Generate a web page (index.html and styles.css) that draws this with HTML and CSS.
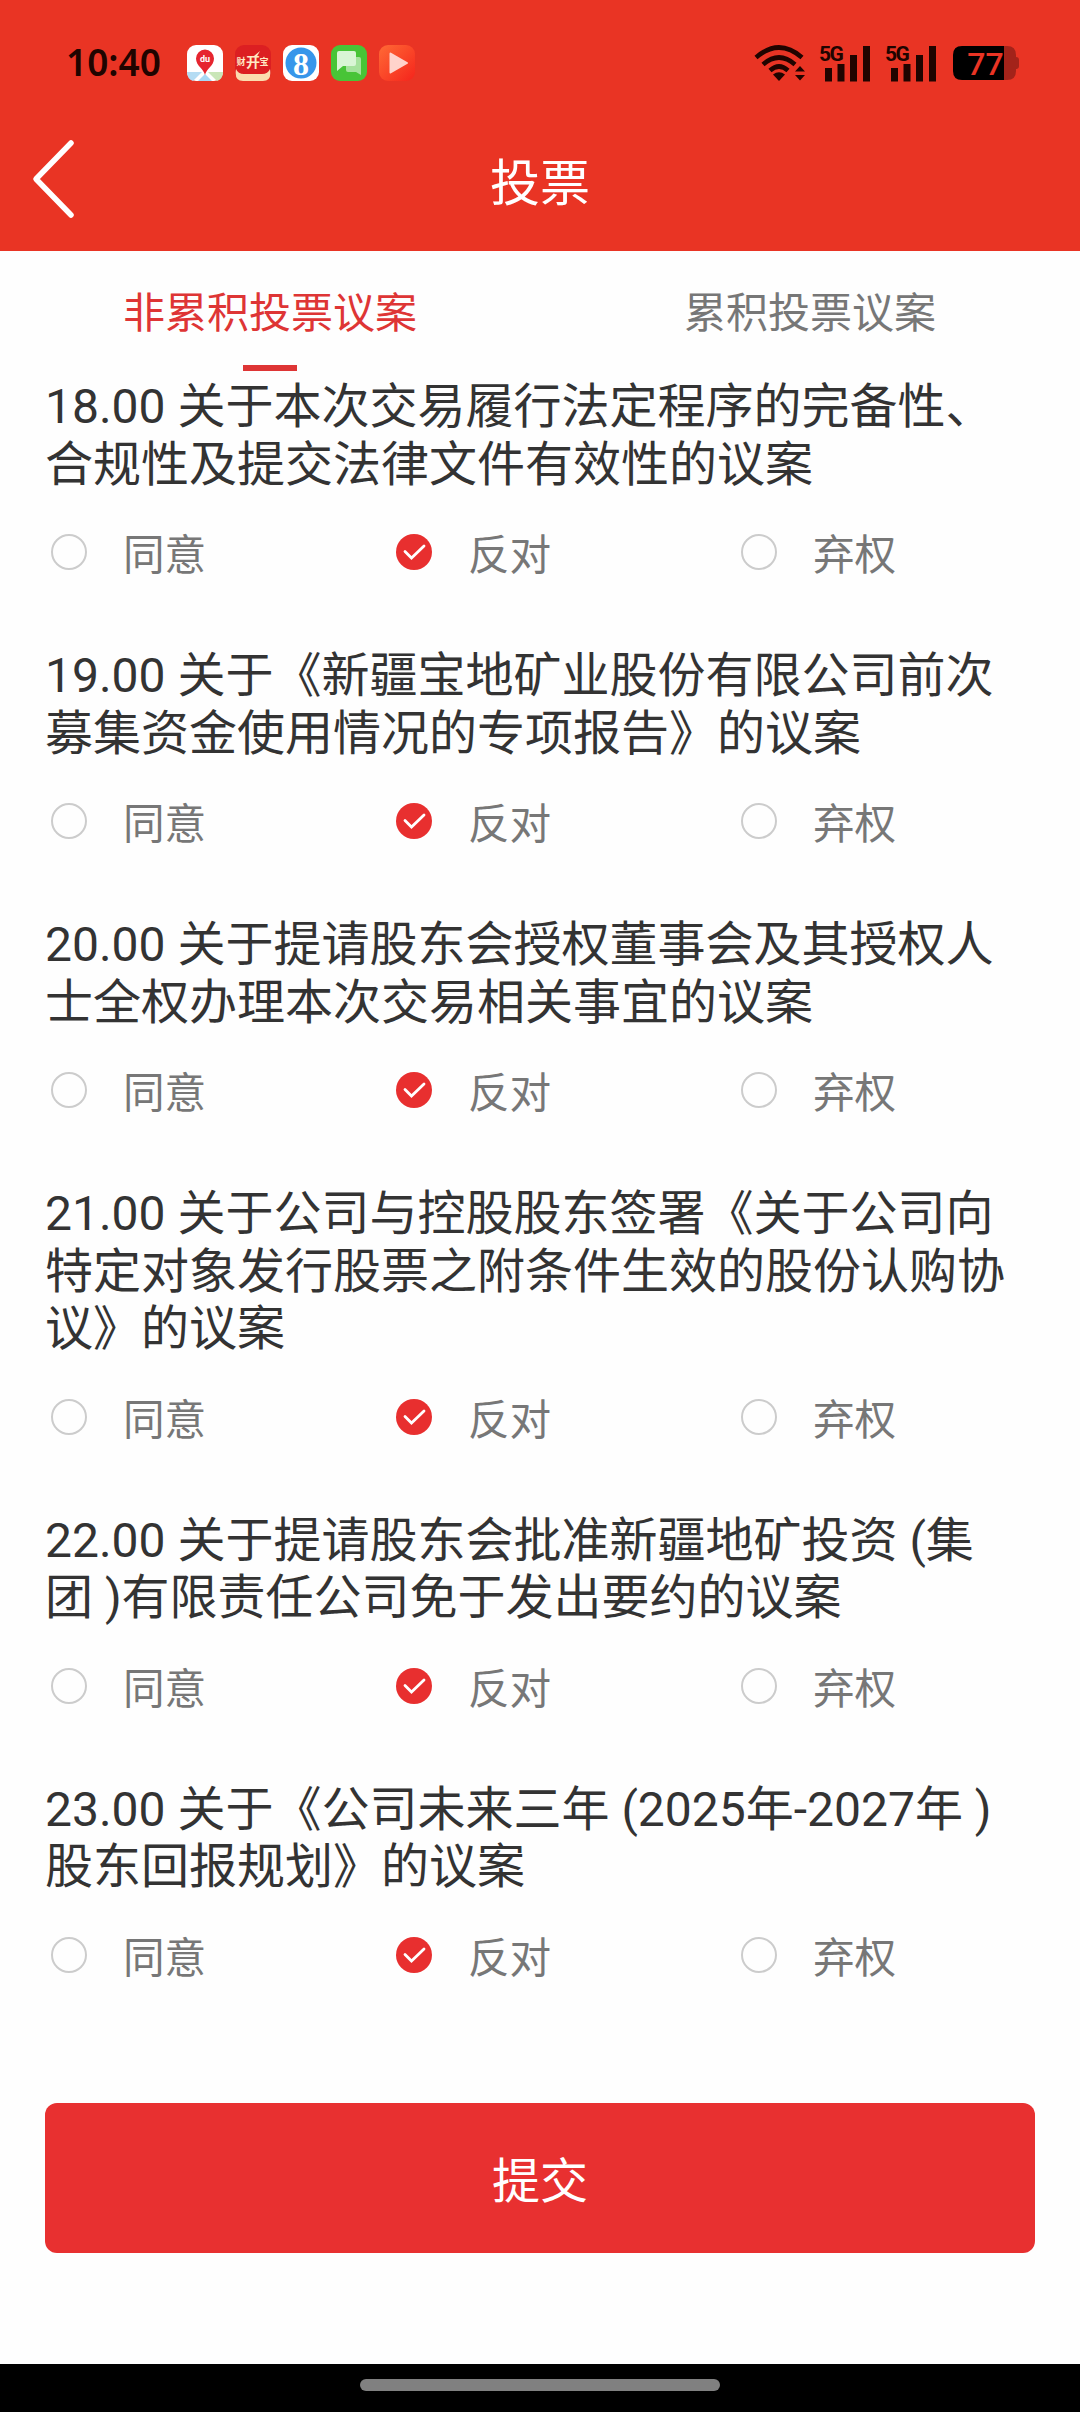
FILE: index.html
```html
<!DOCTYPE html>
<html lang="zh-CN">
<head>
  <meta charset="UTF-8" />
  <meta name="viewport" content="width=device-width, initial-scale=1.0" />
  <title>投票</title>
  <link rel="stylesheet" href="styles.css">
</head>
<body>
  <header>
    <div class="status">
      <span class="time">10:40</span>
      <div class="apps">
        <svg viewBox="0 0 36 36">
          <rect width="36" height="36" rx="9" fill="#fff"/>
          <path d="M0 27L15 27L6 36Q0 34 0 27Z" fill="#b5dcf3"/>
          <path d="M21 27L36 27Q36 34 30 36Z" fill="#c9e6b8"/>
          <path d="M18 29L25 36H11Z" fill="#a8d8f5"/>
          <path d="M18 30C17 24 9 21 9 13.500A9 9 0 0 1 27 13.500C27 21 19 24 18 30Z" fill="#e6252f"/>
          <text x="18" y="17" class="du">du</text>
        </svg>
        <svg viewBox="0 0 36 36">
          <rect width="36" height="36" rx="9" fill="#dc1f22"/>
          <path d="M1 24Q3 29 9 29H27Q33 29 35 24Q37 36 28 36H8Q-1 36 1 24Z" fill="#fbdcae"/>
          <text x="6" y="20" class="cai">财</text>
          <text x="18" y="22" class="cai big">开</text>
          <text x="29" y="20" class="cai">宝</text>
          <path d="M19 11L25 6L21 13Z" fill="#ffe9c4"/>
        </svg>
        <svg viewBox="0 0 36 36">
          <rect width="36" height="36" rx="9" fill="#fff"/>
          <circle cx="18" cy="18" r="15.500" fill="#3796ea"/>
          <text x="18" y="29.500" class="eight">8</text>
        </svg>
        <svg viewBox="0 0 36 36">
          <rect width="36" height="36" rx="9" fill="#48c437"/>
          <path d="M15 12H28Q30 12 30 14V30L25 27H17Q15 27 15 25Z" fill="#a5e29c"/>
          <path d="M8 6H23Q25 6 25 8V19Q25 21 23 21H12L6 26V8Q6 6 8 6Z" fill="#d9f5d5"/>
        </svg>
        <svg viewBox="0 0 36 36">
          <defs>
            <linearGradient id="play" x1="0" y1="0" x2="1" y2="1">
              <stop offset="0" stop-color="#ff6a35"/>
              <stop offset="1" stop-color="#f5241c"/>
            </linearGradient>
          </defs>
          <rect width="36" height="36" rx="9" fill="url(#play)"/>
          <path d="M11.500 8.500L28 18L11.500 27.500Z" fill="#ffd3cb" stroke="#ffd3cb" stroke-width="2" stroke-linejoin="round"/>
        </svg>
      </div>
      <div class="signals">
        <svg class="wifi" viewBox="0 0 52 38">
          <g fill="none" stroke="#200400" stroke-width="4.600">
            <path d="M2 13.500Q25 -6.500 48 13.500"/>
            <path d="M9 20.500Q25 6.500 41 20.500"/>
            <path d="M16 26.500Q25 18.500 34 26.500"/>
          </g>
          <path d="M19 30.500Q25 26 31 30.500L25 37Z" fill="#200400"/>
          <path d="M41 27.500L46 22L51 27.500ZM41 31L46 36.500L51 31Z" fill="#200400"/>
        </svg>
        <svg class="cell" viewBox="0 0 52 40">
          <text x="0" y="18" class="net">5G</text>
          <path d="M6 25h7v13.500h-7ZM18.500 21h7v17.500h-7ZM31 12h7v26.500h-7ZM44 3h7v35.500h-7Z" fill="#200400"/>
        </svg>
        <svg class="cell" viewBox="0 0 52 40">
          <text x="0" y="18" class="net">5G</text>
          <path d="M6 25h7v13.500h-7ZM18.500 21h7v17.500h-7ZM31 12h7v26.500h-7ZM44 3h7v35.500h-7Z" fill="#200400"/>
        </svg>
        <svg class="battery" viewBox="0 0 66 34">
          <path d="M51 0h3Q63 0 63 9v2q3 0 3 3v6q0 3-3 3v2Q63 34 54 34h-3Z" fill="#a3231a"/>
          <path d="M9 0H51V34H9Q0 34 0 25V9Q0 0 9 0Z" fill="#000"/>
          <text x="32.500" y="28.500" class="percent">77</text>
        </svg>
      </div>
    </div>
    <div class="navbar">
      <svg class="back" viewBox="0 0 46 80">
        <path d="M41 4L6 40L41 76" fill="none" stroke="#fff" stroke-width="5.500" stroke-linecap="round" stroke-linejoin="round"/>
      </svg>
      <h1>投票</h1>
    </div>
  </header>
  <div class="tabs">
    <button id="tab-single" class="active">非累积投票议案</button>
    <button id="tab-cumulative">累积投票议案</button>
  </div>
  <main>
    <div id="proposals"></div>
    <button class="submit">提交</button>
  </main>
  <footer><div class="pill"></div></footer>

  <script>
    const proposals = [
      { title: "18.00 关于本次交易履行法定程序的完备性、合规性及提交法律文件有效性的议案", vote: "反对" },
      { title: "19.00 关于《新疆宝地矿业股份有限公司前次募集资金使用情况的专项报告》的议案", vote: "反对" },
      { title: "20.00 关于提请股东会授权董事会及其授权人士全权办理本次交易相关事宜的议案", vote: "反对" },
      { title: "21.00 关于公司与控股股东签署《关于公司向特定对象发行股票之附条件生效的股份认购协议》的议案", vote: "反对" },
      { title: "22.00 关于提请股东会批准新疆地矿投资 (集团 )有限责任公司免于发出要约的议案", vote: "反对" },
      { title: "23.00 关于《公司未来三年 (2025年-2027年 )股东回报规划》的议案", vote: "反对" }
    ];
    const choices = ["同意", "反对", "弃权"];
    const check = '<svg viewBox="0 0 36 36"><path d="M9 17.500L15.500 24L28 12" fill="none" stroke="#fff" stroke-width="2.800" stroke-linecap="round"/></svg>';

    function render() {
      const container = document.getElementById("proposals");
      container.innerHTML = "";
      proposals.forEach((p, i) => {
        const item = document.createElement("section");
        item.className = "proposal";
        item.innerHTML = `
          <h2>${p.title}</h2>
          <div class="options">
            ${choices.map(c => `
              <div class="option" onclick="vote(${i}, '${c}')">
                <span class="radio ${p.vote === c ? "checked" : ""}">${p.vote === c ? check : ""}</span>
                <span>${c}</span>
              </div>`).join("")}
          </div>
        `;
        container.appendChild(item);
      });
    }

    function vote(index, choice) {
      proposals[index].vote = choice;
      render();
    }

    render();
  </script>
</body>
</html>
```
FILE: styles.css
```css
* {
  box-sizing: border-box;
}
body {
  margin: 0;
  min-height: 2412px;
  display: flex;
  flex-direction: column;
  font-family: Roboto, "Noto Sans CJK SC", sans-serif;
  background: #fefefe;
  color: #333;
}
header {
  height: 251px;
  background: #e93424;
  color: #fff;
}
.status {
  display: flex;
  align-items: center;
  height: 126px;
  padding: 0 61px 0 66px;
}
.time {
  width: 121px;
  padding-bottom: 3px;
  font: 600 37px "Noto Sans", sans-serif;
  color: #200400;
}
.apps {
  display: flex;
  gap: 12px;
}
.apps svg {
  width: 36px;
  height: 36px;
}
.du {
  font: bold 9px Roboto, sans-serif;
  fill: #fff;
  text-anchor: middle;
}
.cai {
  font: bold 9px "Noto Sans CJK SC", sans-serif;
  fill: #ffe9c4;
  text-anchor: middle;
}
.big {
  font-size: 14px;
}
.eight {
  font: bold 32px "Liberation Serif", serif;
  fill: #fff;
  text-anchor: middle;
}
.signals {
  display: flex;
  align-items: center;
  margin-left: auto;
}
.wifi {
  width: 52px;
  height: 38px;
  margin-right: 13px;
}
.cell {
  width: 52px;
  height: 40px;
  margin-right: 14px;
}
.cell + .battery {
  margin-left: 2px;
}
.net {
  font: bold 21px Roboto, sans-serif;
  letter-spacing: -1.500px;
  fill: #200400;
}
.battery {
  width: 66px;
  height: 34px;
}
.percent {
  font: 500 32px Roboto, sans-serif;
  fill: #e93424;
  text-anchor: middle;
}
.navbar {
  display: grid;
  grid-template-columns: 80px 1fr 80px;
  align-items: center;
  height: 106px;
}
.back {
  width: 46px;
  height: 80px;
  margin-left: 30px;
}
h1 {
  margin: 0;
  font-size: 50px;
  font-weight: 400;
  text-align: center;
}
.tabs {
  display: grid;
  grid-template-columns: 1fr 1fr;
  height: 127px;
}
.tabs button {
  display: flex;
  flex-direction: column;
  align-items: center;
  height: 120px;
  padding: 34px 0 0;
  border: none;
  background: none;
  color: #777;
  font-family: inherit;
  font-size: 42px;
  line-height: 58px;
}
.tabs button.active {
  color: #de3535;
}
.tabs button.active::after {
  content: "";
  width: 54px;
  height: 6px;
  margin-top: auto;
  background: #de3535;
}
main {
  flex: 1;
  padding: 0 45px;
}
h2 {
  width: 970px;
  margin: 0;
  font-size: 48px;
  font-weight: 400;
  line-height: 57.500px;
}
.options {
  display: grid;
  grid-template-columns: repeat(3, 345px);
  height: 154px;
  padding: 23px 0 59px 6px;
}
.option {
  display: flex;
  align-items: center;
  gap: 36px;
  color: #777;
  font-size: 41.600px;
  cursor: pointer;
}
.radio {
  width: 36px;
  height: 36px;
  border: 2px solid #ccc;
  border-radius: 50%;
}
.radio.checked {
  border: none;
  background: #e82f2f;
}
.radio svg {
  display: block;
}
.submit {
  display: block;
  width: 990px;
  height: 150px;
  margin-top: 53.500px;
  padding-bottom: 4px;
  border: none;
  border-radius: 12px;
  background: #e83030;
  color: #fff;
  font-family: inherit;
  font-size: 48px;
}
footer {
  display: flex;
  justify-content: center;
  height: 48px;
  padding-top: 15px;
  background: #000;
}
.pill {
  width: 360px;
  height: 12px;
  border-radius: 6px;
  background: #808080;
}
```
